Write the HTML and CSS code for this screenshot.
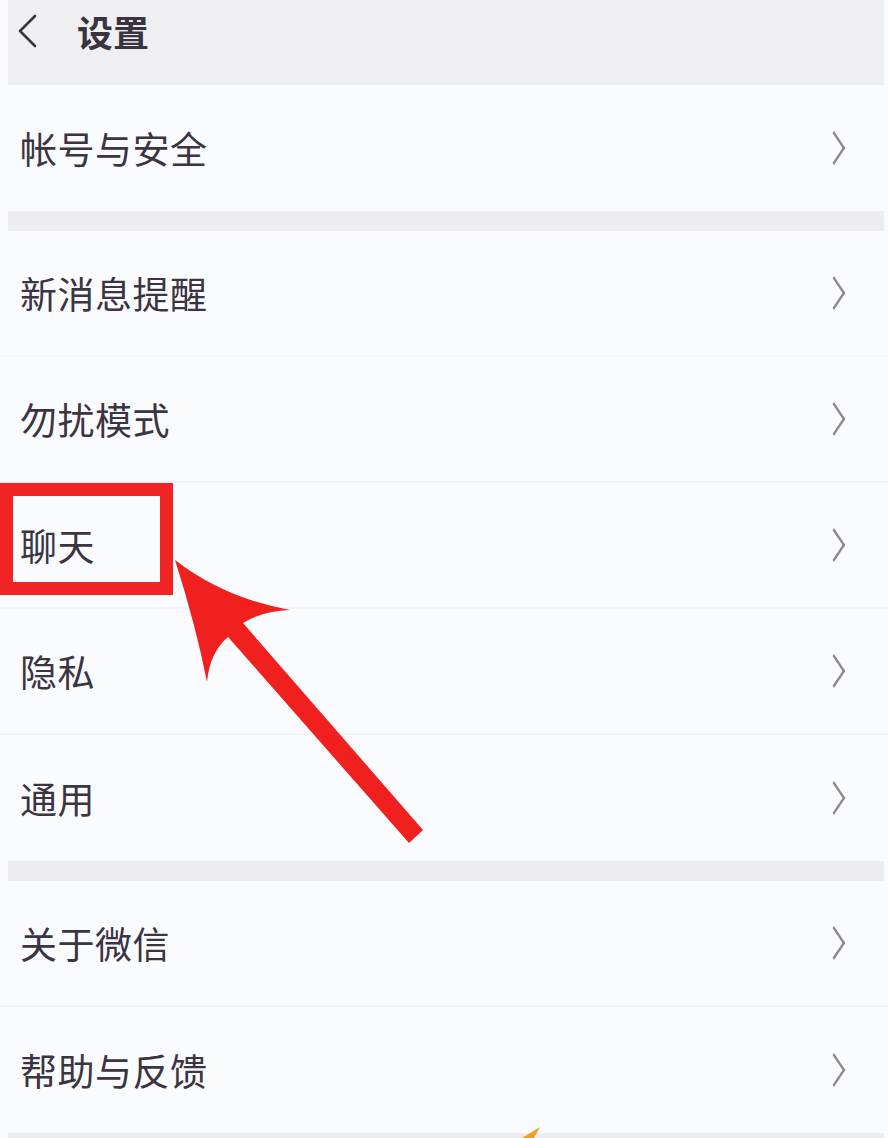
FILE: index.html
```html
<!DOCTYPE html>
<html lang="zh">
<head>
<meta charset="utf-8">
<link rel="stylesheet" href="styles.css">
</head>
<body>
<div class="page">
  <header class="topbar">
    <svg class="back" viewBox="0 0 22 34" width="22" height="34"><polyline points="19,2 4,17 19,32" fill="none" stroke="#3a3440" stroke-width="2.6" stroke-linecap="round" stroke-linejoin="round"/></svg>
    <h1 class="title">设置</h1>
  </header>

  <section class="group">
    <div class="row"><span class="label">帐号与安全</span><span class="chev"></span></div>
  </section>
  <div class="gap"></div>
  <section class="group">
    <div class="row"><span class="label">新消息提醒</span><span class="chev"></span></div>
    <div class="row"><span class="label">勿扰模式</span><span class="chev"></span></div>
    <div class="row"><span class="label">聊天</span><span class="chev"></span></div>
    <div class="row"><span class="label">隐私</span><span class="chev"></span></div>
    <div class="row"><span class="label">通用</span><span class="chev"></span></div>
  </section>
  <div class="gap"></div>
  <section class="group">
    <div class="row"><span class="label">关于微信</span><span class="chev"></span></div>
    <div class="row"><span class="label">帮助与反馈</span><span class="chev"></span></div>
  </section>
  <div class="gap"></div>

  <div class="highlight"></div>
  <svg class="arrow" viewBox="0 0 888 1138" width="888" height="1138">
    <path d="M175,560 Q196,626 207,682 Q210,652 228,637 L409,843 L423,830 L243,623 Q262,611 290,610 Q224,598 175,560 Z" fill="#f0201f"/>
    <path d="M522,1138 L540,1127 L534,1138 Z" fill="#f0a020"/>
  </svg>
</div>
</body>
</html>
```

FILE: styles.css
```css
html, body {
  margin: 0;
  padding: 0;
  background: #f9fafd;
}
.page {
  position: relative;
  width: 888px;
  height: 1138px;
  overflow: hidden;
  font-family: "Noto Sans CJK SC", "Noto Sans", sans-serif;
  color: #3a3440;
  padding: 0 4px 0 8px;
  box-sizing: border-box;
}
.topbar {
  height: 85px;
  background: #efeff2;
  display: flex;
  align-items: center;
  padding: 0 0 24px 8px;
  box-sizing: border-box;
}
.back {
  display: block;
}
.title {
  margin: 0 0 0 39px;
  font-size: 36px;
  font-weight: 700;
  line-height: 1;
  color: #3a3440;
}
.group {
  background: #fafbfe;
  margin-left: -8px;
  margin-right: -4px;
}
.row {
  height: 126px;
  display: flex;
  align-items: center;
  justify-content: space-between;
  padding: 0 42px 0 20px;
  box-sizing: border-box;
  border-bottom: 2px solid #f2f3f7;
}
.row:last-child {
  border-bottom: none;
}
.label {
  font-size: 37px;
  line-height: 1;
  color: #3b3441;
  letter-spacing: 0.5px;
}
.chev {
  width: 14px;
  height: 14px;
  border-top: 2px solid #8c8792;
  border-right: 2px solid #8c8792;
  transform: scaleY(1.5) rotate(45deg);
  margin-right: 4px;
}
.gap {
  height: 20px;
  background: #ededf0;
}
.highlight {
  position: absolute;
  left: 0;
  top: 483px;
  width: 173px;
  height: 112px;
  border: 13px solid #f02424;
  box-sizing: border-box;
}
.arrow {
  position: absolute;
  left: 0;
  top: 0;
  pointer-events: none;
}
```
